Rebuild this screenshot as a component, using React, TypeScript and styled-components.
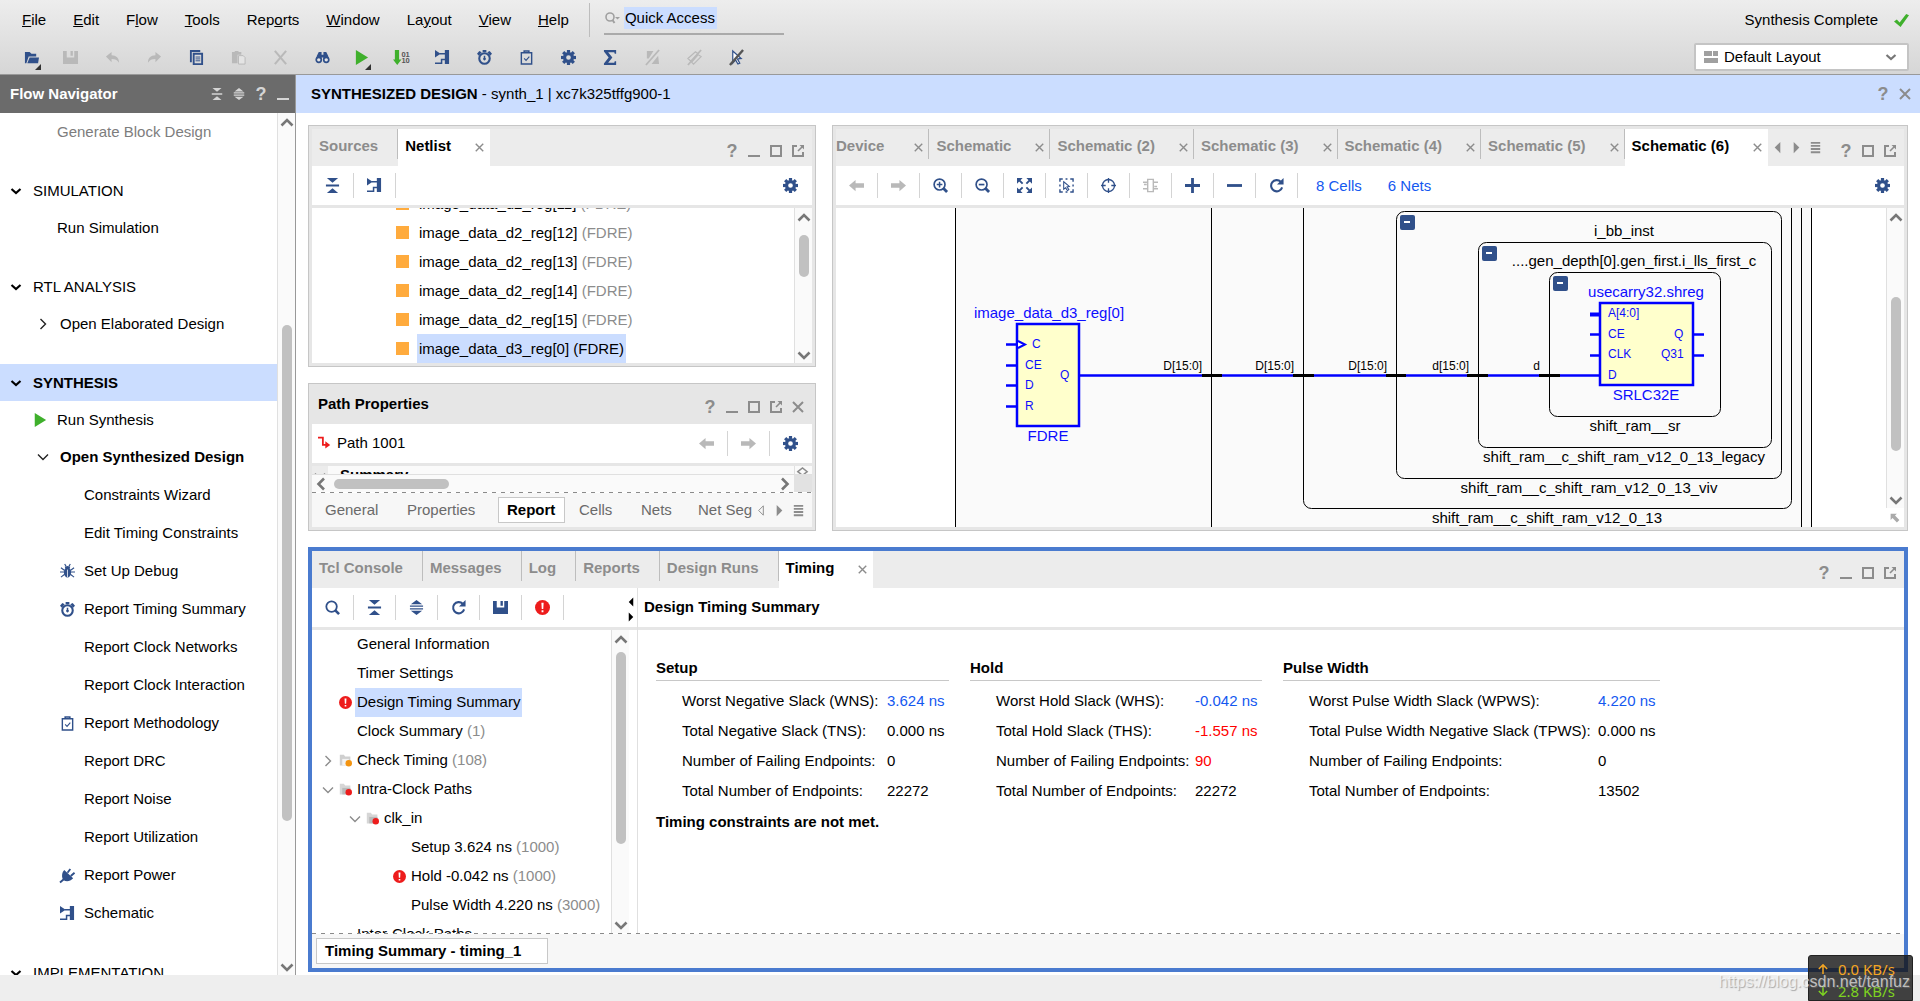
import React from "react";
import styled, { createGlobalStyle, css } from "styled-components";

const C = {
  navy: "#30508a",
  gray: "#8c8c8c",
  off: "#b9b9b9",
  select: "#cbddff",
  strip: "#ececec",
  frame: "#e6e6e6",
  link: "#1458f0",
  green: "#3fb02c",
  red: "#ed1c1c",
};

const Global = createGlobalStyle`
  *, *::before, *::after { box-sizing: border-box; }
  body { margin: 0; background: #eeeeee; }
  body, button, input, select, table {
    font-family: "Liberation Sans", Arial, sans-serif;
    font-size: 15px;
    line-height: 18px;
    color: #000;
  }
  button { margin: 0; padding: 0; border: 0; background: none; text-align: left; white-space: nowrap; }
  a { text-decoration: none; }
`;

/* ---------- icons ---------- */

const teeth = [0, 45, 90, 135, 180, 225, 270, 315];

const ICONS: Record<string, React.ReactNode> = {
  open: (
    <>
      <path d="M1 14V2h5l2 2h5v3H5L2.500 14z" />
      <path d="M6 8h10l-1 6H3.500z" />
    </>
  ),
  save: <path d="M0 1h4v7h8V1h4v14H0zM8 1h2.500v5H8z" />,
  undo: <path d="M1 7l6-5v3.500c5 0 8 3 8 8-2-3-4-4-8-4V13z" />,
  redo: <path d="M15 7L9 2v3.500c-5 0-8 3-8 8 2-3 4-4 8-4V13z" />,
  copy: (
    <g fill="none" stroke="currentColor">
      <path d="M2 13V1h10" strokeWidth="2" />
      <path d="M5 4h9v11H5z" strokeWidth="2" />
      <path d="M7 7.500h5M7 9.500h5M7 11.500h5" />
    </g>
  ),
  paste: (
    <>
      <path d="M1 2h3V1h4v1h3v3H7v9H1z" />
      <path d="M8 6h5l2 2v7H8z" fill="#e4e4e4" stroke="currentColor" />
    </>
  ),
  cross: <path d="M2 1l12 14M14 1L2 15" stroke="currentColor" strokeWidth="2.200" fill="none" />,
  find: (
    <>
      <path d="M2 6l2-4h3v3h2V2h3l2 4 1 4H9V8H7v2H1z" />
      <circle cx="4" cy="10.500" r="2.700" fill="#e4e4e4" stroke="currentColor" strokeWidth="1.800" />
      <circle cx="12" cy="10.500" r="2.700" fill="#e4e4e4" stroke="currentColor" strokeWidth="1.800" />
    </>
  ),
  run: <path d="M2 0l13 8-13 8z" fill={C.green} />,
  bits: (
    <>
      <path d="M2 0h4.500v10H9l-4.500 6L0 10h2z" fill={C.green} />
      <text x="9" y="7" fontSize="8" fontWeight="bold" fill="#555">01</text>
      <text x="9" y="14" fontSize="8" fontWeight="bold" fill="#555">10</text>
    </>
  ),
  schematic: (
    <>
      <path d="M0 0l6 4-6 4zM10.500 0H15v15h-4.500z" />
      <path d="M5 4h6M0 14h7v-4h4" fill="none" stroke="currentColor" strokeWidth="1.600" />
    </>
  ),
  watch: (
    <>
      <circle cx="8" cy="9" r="5.600" fill="none" stroke="currentColor" strokeWidth="2.200" />
      <path d="M6 0h4v2.500H6zM0 4l2.500-3L5 2.500 2 6zM16 4l-2.500-3L11 2.500 14 6zM7.200 6h1.600v2.200a1.500 1.500 0 1 1-1.600 0z" />
    </>
  ),
  clip: (
    <g fill="none" stroke="currentColor">
      <path d="M2.500 3h11v12h-11z" strokeWidth="1.500" />
      <path d="M5.500 3V1h5v2" strokeWidth="1.600" />
      <path d="M5.500 9l2 2 3.500-4" strokeWidth="1.200" />
    </g>
  ),
  gear: (
    <>
      <circle cx="8" cy="8" r="4.200" fill="none" stroke="currentColor" strokeWidth="3.400" />
      {teeth.map((a) => (
        <rect key={a} x="6.300" y="0" width="3.400" height="3" transform={`rotate(${a} 8 8)`} />
      ))}
    </>
  ),
  sigma: <path d="M1 0h13v4h-1.500L12 2.500H5.500L10 8l-4.500 5.500H12l.5-1.500H14v4H1v-1.500L6 8 1 1.500z" />,
  noWarn: (
    <>
      <path d="M2 1h7L4 9H2zM7 15l7-9 1 9z" />
      <path d="M1 16L15 0" stroke="currentColor" strokeWidth="2" />
    </>
  ),
  noLink: (
    <>
      <path d="M1 9l8-7 3 2-8 8zM5 13l7-8 3 2-8 8z" fill="none" stroke="currentColor" strokeWidth="1.300" />
      <path d="M1 16L15 0" stroke="currentColor" strokeWidth="2" />
    </>
  ),
  noCursor: (
    <>
      <path d="M4 1l9 8-4 .5 2.500 4.500-2 1-2.500-4.500L4 14z" fill="#fff" stroke={C.navy} strokeWidth="1.300" />
      <path d="M1 16L15 0" stroke="#555" strokeWidth="2.500" />
    </>
  ),
  collapse: <path d="M2 0h12l-6 5zM1 7h14v2H1zM8 11l6 5H2z" />,
  expand: <path d="M8 0l6 4.500H2zM1 5.800h14v1.400H1zM1 8.800h14v1.400H1zM2 11.500h12L8 16z" />,
  left: <path d="M0 8l7-6v3.500h9v5H7V14z" />,
  right: <path d="M16 8L9 2v3.500H0v5h9V14z" />,
  zoomIn: (
    <g fill="none" stroke="currentColor">
      <circle cx="7" cy="7" r="5.800" strokeWidth="1.800" />
      <path d="M11 11l4 4" strokeWidth="3" />
      <path d="M4 7h6M7 4v6" strokeWidth="1.600" />
    </g>
  ),
  zoomOut: (
    <g fill="none" stroke="currentColor">
      <circle cx="7" cy="7" r="5.800" strokeWidth="1.800" />
      <path d="M11 11l4 4" strokeWidth="3" />
      <path d="M4 7h6" strokeWidth="1.800" />
    </g>
  ),
  search: (
    <g fill="none" stroke="currentColor">
      <circle cx="7" cy="7" r="5.600" strokeWidth="1.900" />
      <path d="M11 11l4 4" strokeWidth="2.800" />
    </g>
  ),
  fit: (
    <>
      <path d="M0 0h6L0 6zM16 0v6l-6-6zM0 16v-6l6 6zM16 16h-6l6-6z" />
      <path d="M2 2l4 4M14 2l-4 4M2 14l4-4M14 14l-4-4" stroke="currentColor" strokeWidth="2" />
    </>
  ),
  area: (
    <g fill="none" stroke="currentColor" strokeWidth="1.500">
      <path d="M1 4V1h3M12 1h3v3M15 12v3h-3M4 15H1v-3M7 1h2M1 7v2M15 7v2M7 15h2" />
      <path d="M5 4l6 5-2.500.5 2 3-1.500 1-2-3L5 12z" strokeWidth="1.100" />
    </g>
  ),
  target: (
    <g fill="none" stroke="currentColor">
      <circle cx="8" cy="8" r="6.400" strokeWidth="1.400" />
      <path d="M8 0v5M8 11v5M0 8h5M11 8h5" strokeWidth="1.400" />
    </g>
  ),
  chip: (
    <g fill="none" stroke="currentColor" strokeWidth="1.500">
      <path d="M5 1.500h6v13H5zM0 4.500h5M0 11.500h5M11 4.500h5M11 11.500h5M1 7h3M12 9h3" />
    </g>
  ),
  plus: <path d="M6.500 0h3v6.500H16v3H9.500V16h-3V9.500H0v-3h6.500z" />,
  minus: <path d="M0 6.500h16v3H0z" />,
  refresh: (
    <>
      <path d="M12.500 4A6 6 0 1 0 14 10" fill="none" stroke="currentColor" strokeWidth="2.200" />
      <path d="M15.500 0v7H8.500z" />
    </>
  ),
  error: (
    <>
      <circle cx="8" cy="8" r="8" fill={C.red} />
      <path d="M6.800 3h2.400l-.4 6.500H7.200zM7 11h2v2H7z" fill="#fff" />
    </>
  ),
  bug: (
    <>
      <ellipse cx="8" cy="9" rx="3.800" ry="5.500" />
      <path d="M5 3l3-1 3 1-1 2H6z" />
      <path d="M5 0l1.500 2.500M11 0L9.500 2.500M0 8.500h16M1 4l4 3M15 4l-4 3M1 14l4-3M15 14l-4-3" stroke="currentColor" strokeWidth="1.200" />
      <path d="M8 6v8" stroke="#fff" strokeWidth="0.800" />
    </>
  ),
  plug: (
    <>
      <path d="M4.500 2l9.500 9c-3 3.500-7.500 4-10 2S1.500 5 4.500 2z" />
      <path d="M8 5l3-4M11.500 8.500L15.500 5M4 12l-4 3.500" stroke="currentColor" strokeWidth="2" />
    </>
  ),
  min: <path d="M2 12h12v2H2z" />,
  max: <path d="M3 3h10v10H3z" fill="none" stroke="currentColor" strokeWidth="2" />,
  pop: (
    <g fill="none" stroke="currentColor">
      <path d="M7 3H3v10h10V9" strokeWidth="2" />
      <path d="M8 8l5-5" strokeWidth="1.600" />
      <path d="M9.500 2H14v4.500z" fill="currentColor" stroke="none" />
    </g>
  ),
  close: <path d="M3 3l10 10M13 3L3 13" stroke="currentColor" strokeWidth="2" fill="none" />,
  tabClose: <path d="M4 4l8 8M12 4l-8 8" stroke="currentColor" strokeWidth="1.500" fill="none" />,
  down: <path d="M3.500 6L8 10l4.500-4" fill="none" stroke="currentColor" strokeWidth="2.200" />,
  thinDown: <path d="M3 5.500l5 5 5-5" fill="none" stroke="currentColor" strokeWidth="1.400" />,
  thinRight: <path d="M5.500 3l5 5-5 5" fill="none" stroke="currentColor" strokeWidth="1.400" />,
  scrollUp: <path d="M2.500 10.500L8 5l5.500 5.500" fill="none" stroke="currentColor" strokeWidth="2.600" />,
  scrollDown: <path d="M2.500 5.500L8 11l5.500-5.500" fill="none" stroke="currentColor" strokeWidth="2.600" />,
  scrollLeft: <path d="M11 2.500L5.500 8l5.500 5.500" fill="none" stroke="currentColor" strokeWidth="2.600" />,
  scrollRight: <path d="M5 2.500L10.500 8 5 13.500" fill="none" stroke="currentColor" strokeWidth="2.600" />,
  triLeft: <path d="M11 2v12L5 8z" />,
  triRight: <path d="M5 2v12l6-6z" />,
  triLeftOpen: <path d="M11 3v10L6 8z" fill="none" stroke="currentColor" />,
  list: <path d="M3 2h10v2H3zM3 5.300h10v2H3zM3 8.600h10v2H3zM3 12h10v2H3z" />,
  corner: <path d="M1 1h10L8 4l7 7-4 4-7-7-3 3z" />,
  path: (
    <>
      <path d="M0 2h6v9h5" fill="none" stroke={C.red} strokeWidth="2.200" />
      <path d="M9 6.500l6 4.500-6 4.500z" fill={C.red} />
    </>
  ),
  spin: <path d="M3 6l5-4 5 4-5 4z" fill="none" stroke="currentColor" strokeWidth="1.600" />,
  tick: <path d="M0 9l3-2 3 3 7-9 3 1.500L7 15z" fill={C.green} />,
  layout: <path d="M1 2h8v5H1zM10 2h5v5h-5zM1 9h14v5H1z" />,
  folderRed: (
    <>
      <path d="M1 1h5l1.500 2H14v11H1z" fill="#d6d6d6" />
      <path d="M4 6h10v8H4z" fill="#b9b9b9" />
      <circle cx="12" cy="11.500" r="4" fill={C.red} />
    </>
  ),
  folderOrange: (
    <>
      <path d="M1 1h5l1.500 2H14v11H1z" fill="#cfcfcf" />
      <path d="M4 6h8v8H4z" fill="#f3f3f3" />
      <circle cx="12" cy="11.500" r="4" fill="#f39410" />
    </>
  ),
  lookup: (
    <>
      <circle cx="6" cy="7" r="4" fill="none" stroke="currentColor" strokeWidth="1.600" />
      <path d="M8.500 10l2 3" stroke="currentColor" strokeWidth="2" />
      <path d="M11 7h5l-2.500 2.500z" />
    </>
  ),
};

const Svg = styled.svg<{ $size: number; $color: string }>`
  display: block;
  flex: none;
  width: ${(p) => p.$size}px;
  height: ${(p) => p.$size}px;
  color: ${(p) => p.$color};
  fill: currentColor;
  overflow: visible;
`;

const Icon = ({ name, size = 16, color = C.navy }: { name: string; size?: number; color?: string }) => (
  <Svg viewBox="0 0 16 16" $size={size} $color={color} aria-hidden="true">
    {ICONS[name]}
  </Svg>
);

/* ---------- page frame ---------- */

const Page = styled.div`
  display: grid;
  grid-template-rows: auto minmax(0, 1fr) 26px;
  height: 100vh;
  min-width: 1280px;
  position: relative;
  overflow: hidden;
`;

const Top = styled.header`
  display: flex;
  justify-content: space-between;
  height: 75px;
  background: linear-gradient(#ededed, #d6d6d6);
  border-bottom: 1px solid #999;
`;

const MenuRow = styled.div`
  display: flex;
  align-items: center;
  height: 40px;
  padding-left: 22px;
`;

const Menu = styled.nav`
  display: flex;
  gap: 27px;
  padding-right: 20px;
`;

const Search = styled.label`
  display: flex;
  align-items: center;
  gap: 4px;
  width: 180px;
  height: 29px;
  margin-left: 14px;
  border-bottom: 2px solid #aaa;
  padding-bottom: 3px;
`;

const SearchInput = styled.input`
  width: 93px;
  height: 22px;
  padding: 0 0 0 1px;
  border: 0;
  background: ${C.select};
`;

const MenuDivider = styled.i`
  width: 1px;
  height: 34px;
  background: #bdbdbd;
`;

const MainTools = styled.div`
  display: flex;
  height: 34px;
  margin-left: 13px;
`;

const MainTool = styled.button<{ $menu?: boolean }>`
  display: grid;
  place-items: center;
  position: relative;
  width: ${(p) => (p.$menu ? 36 : 42)}px;
  ${(p) =>
    p.$menu &&
    css`
      &::after {
        content: "";
        position: absolute;
        right: 8px;
        bottom: 4px;
        border: 3px solid transparent;
        border-right-color: #333;
        border-bottom-color: #333;
      }
    `}
`;

const Status = styled.div`
  display: flex;
  flex-direction: column;
  align-items: flex-end;
  gap: 3px;
  padding-right: 11px;
`;

const StatusText = styled.div`
  display: flex;
  align-items: center;
  gap: 16px;
  height: 40px;
`;

const LayoutBox = styled.label`
  display: flex;
  align-items: center;
  width: 215px;
  height: 28px;
  padding: 0 8px 0 7px;
  gap: 5px;
  background: #fff;
  border: 2px solid #c4c4c4;
  border-radius: 2px;
`;

const LayoutSelect = styled.select`
  flex: 1;
  appearance: none;
  border: 0;
  background: none;
  padding: 0;
`;

const Body = styled.div`
  display: grid;
  grid-template-columns: 296px minmax(0, 1fr);
  min-height: 0;
`;

const Footer = styled.footer`
  background: #eeeeee;
`;

/* ---------- scroll bars ---------- */

const Bar = styled.div`
  display: flex;
  flex-direction: column;
  align-items: center;
  flex: none;
  width: 18px;
  background: #fafafa;
  border-left: 1px solid #e0e0e0;
`;

const Arrow = styled.button<{ $h: number }>`
  display: grid;
  place-items: center;
  height: ${(p) => p.$h}px;
`;

const Space = styled.i<{ $n: number }>`
  flex: ${(p) => p.$n} 0 0;
`;

const Thumb = styled.i<{ $n: number }>`
  flex: ${(p) => p.$n} 0 0;
  width: 10px;
  border-radius: 5px;
  background: #c1c1c1;
`;

const Scroll = ({ parts }: { parts: [number, number, number] }) => (
  <Bar>
    <Arrow $h={20} aria-label="Scroll up"><Icon name="scrollUp" color="#777" /></Arrow>
    <Space $n={parts[0]} />
    <Thumb $n={parts[1]} />
    <Space $n={parts[2]} />
    <Arrow $h={16} aria-label="Scroll down"><Icon name="scrollDown" color="#777" /></Arrow>
  </Bar>
);

/* ---------- flow navigator ---------- */

const Nav = styled.aside`
  display: flex;
  flex-direction: column;
  min-height: 0;
  background: #fff;
  border-right: 1px solid #999;
`;

const NavHead = styled.div`
  display: flex;
  align-items: center;
  flex: none;
  height: 38px;
  padding: 0 1px 0 10px;
  background: #6b6b6b;
  color: #fff;
  font-weight: bold;
`;

const Grow = styled.span`
  flex: 1;
`;

const NavBody = styled.div`
  display: flex;
  flex: 1;
  min-height: 0;
`;

const NavList = styled.div`
  flex: 1;
  min-width: 0;
  overflow: hidden;
`;

const NavHeading = styled.button<{ $on?: boolean }>`
  display: flex;
  align-items: center;
  gap: 9px;
  width: 100%;
  height: 37px;
  margin-top: 22px;
  padding-left: 8px;
  ${(p) => p.$on && css`background: ${C.select}; font-weight: bold;`}
`;

const NavItem = styled.button<{ $indent: number; $tall?: boolean; $muted?: boolean; $bold?: boolean }>`
  display: flex;
  align-items: center;
  gap: 9px;
  width: 100%;
  height: ${(p) => (p.$tall ? 38 : 37)}px;
  padding-left: ${(p) => p.$indent}px;
  color: ${(p) => (p.$muted ? "#7d7d7d" : "#000")};
  font-weight: ${(p) => (p.$bold ? "bold" : "normal")};
`;

const Slot = styled.span<{ $w: number }>`
  display: grid;
  place-items: center;
  flex: none;
  width: ${(p) => p.$w}px;
`;

const subItems: [string, string?][] = [
  ["Constraints Wizard"],
  ["Edit Timing Constraints"],
  ["Set Up Debug", "bug"],
  ["Report Timing Summary", "watch"],
  ["Report Clock Networks"],
  ["Report Clock Interaction"],
  ["Report Methodology", "clip"],
  ["Report DRC"],
  ["Report Noise"],
  ["Report Utilization"],
  ["Report Power", "plug"],
  ["Schematic", "schematic"],
];

const Navigator = () => (
  <Nav>
    <NavHead>
      Flow Navigator
      <Grow />
      <WinButton aria-label="Collapse all"><Icon name="collapse" size={12} color="#d5d5d5" /></WinButton>
      <WinButton aria-label="Expand all"><Icon name="expand" size={12} color="#d5d5d5" /></WinButton>
      <WinButton $light>?</WinButton>
      <WinButton aria-label="Minimize"><Icon name="min" color="#d5d5d5" /></WinButton>
    </NavHead>
    <NavBody>
      <NavList>
        <NavItem $indent={32} $muted><Slot $w={16} />Generate Block Design</NavItem>
        <NavHeading><Slot $w={16}><Icon name="down" color="#000" /></Slot>SIMULATION</NavHeading>
        <NavItem $indent={32}><Slot $w={16} />Run Simulation</NavItem>
        <NavHeading><Slot $w={16}><Icon name="down" color="#000" /></Slot>RTL ANALYSIS</NavHeading>
        <NavItem $indent={35}><Slot $w={16}><Icon name="thinRight" color="#222" /></Slot>Open Elaborated Design</NavItem>
        <NavHeading $on><Slot $w={16}><Icon name="down" color="#000" /></Slot>SYNTHESIS</NavHeading>
        <NavItem $indent={32}><Slot $w={16}><Icon name="run" size={14} /></Slot>Run Synthesis</NavItem>
        <NavItem $indent={35} $tall $bold><Slot $w={16}><Icon name="thinDown" color="#222" /></Slot>Open Synthesized Design</NavItem>
        {subItems.map(([label, icon]) => (
          <NavItem key={label} $indent={59} $tall>
            <Slot $w={16}>{icon && <Icon name={icon} size={15} />}</Slot>
            {label}
          </NavItem>
        ))}
        <NavHeading><Slot $w={16}><Icon name="down" color="#000" /></Slot>IMPLEMENTATION</NavHeading>
      </NavList>
      <Scroll parts={[192, 496, 138]} />
    </NavBody>
  </Nav>
);

/* ---------- panels ---------- */

const Main = styled.main`
  display: flex;
  flex-direction: column;
  min-height: 0;
  background: #fff;
`;

const DesignBar = styled.div`
  display: flex;
  align-items: center;
  flex: none;
  height: 38px;
  padding: 0 4px 0 15px;
  background: ${C.select};
`;

const Workspace = styled.div`
  display: grid;
  grid-template-rows: minmax(0, 406fr) minmax(0, 425fr);
  gap: 16px;
  flex: 1;
  min-height: 0;
  padding: 12px 12px 3px;
`;

const UpperRow = styled.div`
  display: grid;
  grid-template-columns: 508px minmax(0, 1fr);
  gap: 16px;
  min-height: 0;
`;

const LeftStack = styled.div`
  display: grid;
  grid-template-rows: minmax(0, 242fr) minmax(0, 148fr);
  gap: 16px;
  min-height: 0;
`;

const Panel = styled.section<{ $active?: boolean }>`
  display: flex;
  flex-direction: column;
  min-width: 0;
  min-height: 0;
  background: #fff;
  ${(p) =>
    p.$active
      ? css`border: 4px solid #4a7bcf;`
      : css`
          border: 3px solid ${C.frame};
          outline: 1px solid #c6c6c6;
          margin: 1px;
        `}
`;

const Strip = styled.div`
  display: flex;
  flex: none;
  height: 37px;
  background: ${C.strip};
`;

const Tab = styled.button<{ $on?: boolean; $closable?: boolean; $flush?: boolean }>`
  display: flex;
  align-items: center;
  flex: none;
  gap: ${(p) => (p.$flush ? 27 : 21)}px;
  height: 37px;
  padding: 0 ${(p) => (p.$closable ? 3 : 20)}px 4px ${(p) => (p.$flush ? 0 : 7)}px;
  font-weight: bold;
  color: ${(p) => (p.$on ? "#000" : C.gray)};
  background: ${(p) =>
    p.$on ? "#fff" : `linear-gradient(#bdbdbd, #bdbdbd) right top / 1px 30px no-repeat, ${C.strip}`};
`;

const TabX = styled.span`
  padding-top: 4px;
`;

const PanelTab = ({ label, on, x, flush }: { label: string; on?: boolean; x?: boolean; flush?: boolean }) => (
  <Tab $on={on} $closable={x} $flush={flush}>
    {label}
    {x && <TabX><Icon name="tabClose" size={15} color={C.gray} /></TabX>}
  </Tab>
);

const WinButtons = styled.div`
  display: flex;
  align-items: center;
  margin-left: auto;
  padding: 6px 3px 0 0;
`;

const WinButton = styled.button<{ $light?: boolean }>`
  display: grid;
  place-items: center;
  width: 22px;
  height: 22px;
  font-size: 18px;
  font-weight: bold;
  color: ${(p) => (p.$light ? "#d5d5d5" : C.gray)};
`;

const WindowControls = ({ icons }: { icons: string[] }) => (
  <WinButtons>
    <WinButton>?</WinButton>
    {icons.map((n) => (
      <WinButton key={n} aria-label={n}><Icon name={n} color={C.gray} /></WinButton>
    ))}
  </WinButtons>
);

const Tools = styled.div`
  display: flex;
  align-items: center;
  flex: none;
  height: 42px;
  border-bottom: 3px solid ${C.frame};
`;

const Tool = styled.button<{ $plain?: boolean }>`
  display: grid;
  place-items: center;
  flex: none;
  width: 42px;
  height: 25px;
  border-right: 1px solid ${(p) => (p.$plain ? "transparent" : "#d4d4d4")};
`;

const Split = styled.div`
  display: flex;
  flex: 1;
  min-height: 0;
`;

const NetRows = styled.div`
  display: flex;
  flex-direction: column;
  justify-content: flex-end;
  flex: 1;
  overflow: hidden;
`;

const NetRow = styled.button`
  display: flex;
  align-items: center;
  flex: none;
  gap: 8px;
  height: 29px;
  padding-left: 84px;
`;

const Square = styled.i`
  width: 13px;
  height: 13px;
  background: #ffab3d;
`;

const Label = styled.span<{ $on?: boolean }>`
  padding: 0 2px;
  line-height: 29px;
  background: ${(p) => (p.$on ? C.select : "transparent")};
`;

const Muted = styled.span`
  color: ${C.gray};
`;

const nets = ["image_data_d2_reg[11]", "image_data_d2_reg[12]", "image_data_d2_reg[13]", "image_data_d2_reg[14]", "image_data_d2_reg[15]"];

const NetlistPanel = () => (
  <Panel>
    <Strip>
      <PanelTab label="Sources" />
      <PanelTab label="Netlist" on x />
      <WindowControls icons={["min", "max", "pop"]} />
    </Strip>
    <Tools>
      <Tool aria-label="Collapse all"><Icon name="collapse" size={15} /></Tool>
      <Tool aria-label="Schematic"><Icon name="schematic" size={15} /></Tool>
      <Grow />
      <Tool $plain aria-label="Settings"><Icon name="gear" size={15} /></Tool>
    </Tools>
    <Split>
      <NetRows>
        {nets.map((n) => (
          <NetRow key={n}><Square /><Label>{n} <Muted>(FDRE)</Muted></Label></NetRow>
        ))}
        <NetRow><Square /><Label $on>image_data_d3_reg[0] (FDRE)</Label></NetRow>
      </NetRows>
      <Scroll parts={[7, 42, 70]} />
    </Split>
  </Panel>
);

const TitleStrip = styled.div`
  display: flex;
  align-items: center;
  flex: none;
  height: 37px;
  padding: 0 0 3px 6px;
  background: ${C.frame};
  font-weight: bold;
`;

const PathName = styled.span`
  display: flex;
  align-items: center;
  gap: 6px;
  padding: 0 0 2px 6px;
`;

const SummaryLine = styled.div`
  display: flex;
  flex: 1;
  min-height: 0;
  overflow: hidden;
  background: #fafafa;
  font-weight: bold;
`;

const Gutter = styled.span`
  width: 16px;
  margin-right: 12px;
  padding-top: 2px;
  background: ${C.strip};
`;

const SpinBox = styled.span`
  width: 18px;
  border-left: 1px solid #e0e0e0;
`;

const HBar = styled.div`
  display: flex;
  align-items: center;
  flex: none;
  height: 18px;
  border-top: 1px solid #e0e0e0;
  background: #fafafa;
`;

const HThumb = styled.i`
  width: 115px;
  height: 10px;
  margin-left: 4px;
  border-radius: 5px;
  background: #c1c1c1;
`;

const HCorner = styled.i`
  width: 18px;
  height: 18px;
  background: #e2e2e2;
`;

const Dash = styled.div`
  flex: none;
  height: 1px;
  background: repeating-linear-gradient(90deg, #8a8a8a 0 4px, #fff 4px 9px);
`;

const BottomTabs = styled.div`
  display: flex;
  align-items: center;
  flex: none;
  height: 34px;
  padding-left: 4px;
  background: #f7f7f7;
`;

const BottomTab = styled.button<{ $on?: boolean; $w: number }>`
  flex: none;
  width: ${(p) => p.$w}px;
  height: 26px;
  padding-left: 8px;
  border: 1px solid ${(p) => (p.$on ? "#c8c8c8" : "transparent")};
  background: ${(p) => (p.$on ? "#fff" : "transparent")};
  font-weight: ${(p) => (p.$on ? "bold" : "normal")};
  color: ${(p) => (p.$on ? "#000" : "#6a6a6a")};
`;

const StepButton = styled.button`
  display: grid;
  place-items: center;
  align-self: center;
  width: 19px;
  height: 26px;
`;

const PathPanel = () => (
  <Panel>
    <TitleStrip>
      Path Properties
      <WindowControls icons={["min", "max", "pop", "close"]} />
    </TitleStrip>
    <Tools>
      <PathName><Icon name="path" size={13} />Path 1001</PathName>
      <Grow />
      <Tool aria-label="Back"><Icon name="left" color={C.off} size={15} /></Tool>
      <Tool aria-label="Forward"><Icon name="right" color={C.off} size={15} /></Tool>
      <Tool $plain aria-label="Settings"><Icon name="gear" size={15} /></Tool>
    </Tools>
    <SummaryLine>
      <Gutter><Icon name="thinDown" color={C.gray} /></Gutter>
      Summary
      <Grow />
      <SpinBox><Icon name="spin" color={C.gray} size={15} /></SpinBox>
    </SummaryLine>
    <HBar>
      <Slot $w={18}><Icon name="scrollLeft" color="#777" /></Slot>
      <HThumb />
      <Grow />
      <Slot $w={18}><Icon name="scrollRight" color="#777" /></Slot>
      <HCorner />
    </HBar>
    <Dash />
    <BottomTabs>
      <BottomTab $w={82}>General</BottomTab>
      <BottomTab $w={100}>Properties</BottomTab>
      <BottomTab $w={67} $on>Report</BottomTab>
      <Slot $w={5} />
      <BottomTab $w={62}>Cells</BottomTab>
      <BottomTab $w={57}>Nets</BottomTab>
      <BottomTab $w={62}>Net Seg</BottomTab>
      <StepButton aria-label="Previous"><Icon name="triLeftOpen" size={15} color={C.gray} /></StepButton>
      <StepButton aria-label="Next"><Icon name="triRight" size={15} color={C.gray} /></StepButton>
      <StepButton aria-label="Tab list"><Icon name="list" size={15} color={C.gray} /></StepButton>
    </BottomTabs>
  </Panel>
);

/* ---------- schematic ---------- */

const Canvas = styled.div`
  flex: 1;
  min-width: 0;
  overflow: hidden;
`;

const Drawing = styled.svg`
  display: block;
  font-family: "Liberation Sans", Arial, sans-serif;
`;

const ScrollColumn = styled.div`
  display: flex;
  flex-direction: column;
  align-items: center;
`;

const ScrollFill = styled.div`
  display: flex;
  flex: 1;
  min-height: 0;
`;

const CornerBox = styled.button`
  display: grid;
  place-items: center;
  width: 18px;
  height: 19px;
`;

const LinkText = styled.a`
  padding-left: 18px;
  margin-right: 8px;
  color: ${C.link};
`;

const Collapse = ({ x, y }: { x: number; y: number }) => (
  <g>
    <rect x={x} y={y} width="15" height="15" rx="2" fill={C.navy} />
    <rect x={x + 4} y={y + 6} width="6" height="2" fill="#fff" />
  </g>
);

const frames: [number, number, number, number][] = [
  [1303, 150, 488, 358],
  [1396, 211, 385, 267],
  [1478, 242, 293, 205],
  [1549, 272, 171, 144],
];

const captions: [string, number, number, boolean?][] = [
  ["image_data_d3_reg[0]", 1049, 318, true],
  ["FDRE", 1048, 441, true],
  ["usecarry32.shreg", 1646, 297, true],
  ["SRLC32E", 1646, 400, true],
  ["i_bb_inst", 1624, 236],
  ["....gen_depth[0].gen_first.i_lls_first_c", 1634, 266],
  ["shift_ram__sr", 1635, 431],
  ["shift_ram__c_shift_ram_v12_0_13_legacy", 1624, 462],
  ["shift_ram__c_shift_ram_v12_0_13_viv", 1589, 493],
  ["shift_ram__c_shift_ram_v12_0_13", 1547, 523],
];

const pinNames: [string, number, number][] = [
  ["C", 1032, 348],
  ["CE", 1025, 369],
  ["D", 1025, 389],
  ["R", 1025, 410],
  ["Q", 1060, 379],
  ["A[4:0]", 1608, 317],
  ["CE", 1608, 338],
  ["CLK", 1608, 358],
  ["D", 1608, 379],
  ["Q", 1674, 338],
  ["Q31", 1661, 358],
];

const busNames: [string, number][] = [
  ["D[15:0]", 1202],
  ["D[15:0]", 1294],
  ["D[15:0]", 1387],
  ["d[15:0]", 1469],
  ["d", 1540],
];

const SchematicDrawing = () => (
  <Drawing width="1050" height="319" viewBox="836 208 1050 319">
    <rect x="955" y="200" width="856" height="340" fill="#fafafa" />
    <g stroke="#000" fill="none">
      <path d="M955.500 200v340M1211.500 200v340M1801.500 200v340M1811.500 200v340" />
      {frames.map(([x, y, w, h]) => (
        <rect key={x} x={x + 0.5} y={y + 0.5} width={w} height={h} rx="8" />
      ))}
    </g>
    <Collapse x={1400} y={215} />
    <Collapse x={1482} y={246} />
    <Collapse x={1553} y={276} />
    <g stroke="#0000ff" strokeWidth="2.500">
      <path d="M1080 375.500H1599" />
      <path d="M1006 344.500h11M1006 365.500h11M1006 385.500h11M1006 406.500h11M1590 334.500h10M1590 355.500h10M1693 334.500h11M1693 355.500h11" />
      <path d="M1590 314.500h10" strokeWidth="4" />
      <rect x="1017" y="324" width="62" height="102" fill="#ffffcc" />
      <rect x="1600" y="303" width="93" height="82" fill="#ffffcc" />
      <path d="M1018 341l7 3.500-7 3.500" fill="#fff" strokeWidth="2" />
    </g>
    <path d="M1202 375.500h20M1293 375.500h21M1386 375.500h20M1467 375.500h21M1539 375.500h21" stroke="#000" strokeWidth="3" />
    <g fontSize="15" textAnchor="middle">
      {captions.map(([t, x, y, blue]) => (
        <text key={t} x={x} y={y} fill={blue ? "#0d0dff" : "#000"}>{t}</text>
      ))}
    </g>
    <g fontSize="12" fill="#0d0dff">
      {pinNames.map(([t, x, y]) => (
        <text key={`${t}${x}${y}`} x={x} y={y}>{t}</text>
      ))}
    </g>
    <g fontSize="12" textAnchor="end">
      {busNames.map(([t, x]) => (
        <text key={x} x={x} y="370">{t}</text>
      ))}
    </g>
  </Drawing>
);

const schematicTools = [
  ["left", C.off],
  ["right", C.off],
  ["zoomIn"],
  ["zoomOut"],
  ["fit"],
  ["area"],
  ["target"],
  ["chip", C.off],
  ["plus"],
  ["minus"],
  ["refresh"],
];

const SchematicPanel = () => (
  <Panel>
    <Strip>
      <PanelTab label="Device" x flush />
      <PanelTab label="Schematic" x />
      <PanelTab label="Schematic (2)" x />
      <PanelTab label="Schematic (3)" x />
      <PanelTab label="Schematic (4)" x />
      <PanelTab label="Schematic (5)" x />
      <PanelTab label="Schematic (6)" x on />
      <StepButton aria-label="Previous"><Icon name="triLeft" size={15} color={C.gray} /></StepButton>
      <StepButton aria-label="Next"><Icon name="triRight" size={15} color={C.gray} /></StepButton>
      <StepButton aria-label="Tab list"><Icon name="list" size={15} color={C.gray} /></StepButton>
      <WindowControls icons={["max", "pop"]} />
    </Strip>
    <Tools>
      {schematicTools.map(([n, c]) => (
        <Tool key={n} aria-label={n}><Icon name={n} color={c} size={15} /></Tool>
      ))}
      <LinkText href="#cells">8 Cells</LinkText>
      <LinkText href="#nets">6 Nets</LinkText>
      <Grow />
      <Tool $plain aria-label="Settings"><Icon name="gear" size={15} /></Tool>
    </Tools>
    <Split>
      <Canvas><SchematicDrawing /></Canvas>
      <ScrollColumn>
        <ScrollFill><Scroll parts={[69, 154, 41]} /></ScrollFill>
        <CornerBox aria-label="Overview"><Icon name="corner" size={10} color="#aaa" /></CornerBox>
      </ScrollColumn>
    </Split>
  </Panel>
);

/* ---------- timing ---------- */

const TreePane = styled.div`
  display: flex;
  flex-direction: column;
  flex: none;
  width: 326px;
  min-height: 0;
  border-right: 1px solid #e0e0e0;
`;

const TreeArea = styled.div`
  display: flex;
  flex: 1;
  min-height: 0;
  padding-right: 8px;
`;

const TreeRows = styled.div`
  display: flex;
  flex-direction: column;
  flex: 1;
  overflow: hidden;
`;

const TreeRow = styled.button<{ $level: number }>`
  display: flex;
  align-items: center;
  flex: none;
  gap: 3px;
  height: 29px;
  padding-left: ${(p) => 8 + p.$level * 27}px;
  ${Label} {
    padding-bottom: 2px;
    line-height: 27px;
  }
`;

const SplitArrows = styled.div`
  display: grid;
  gap: 3px;
  margin-left: auto;
  padding-top: 3px;
`;

const tree: { text: string; count?: string; level: number; open?: string; icon?: string; on?: boolean }[] = [
  { text: "General Information", level: 0 },
  { text: "Timer Settings", level: 0 },
  { text: "Design Timing Summary", level: 0, icon: "error", on: true },
  { text: "Clock Summary", count: "(1)", level: 0 },
  { text: "Check Timing", count: "(108)", level: 0, open: "thinRight", icon: "folderOrange" },
  { text: "Intra-Clock Paths", level: 0, open: "thinDown", icon: "folderRed" },
  { text: "clk_in", level: 1, open: "thinDown", icon: "folderRed" },
  { text: "Setup 3.624 ns", count: "(1000)", level: 2 },
  { text: "Hold -0.042 ns", count: "(1000)", level: 2, icon: "error" },
  { text: "Pulse Width 4.220 ns", count: "(3000)", level: 2 },
  { text: "Inter-Clock Paths", level: 0 },
];

const Report = styled.div`
  flex: 1;
  min-width: 0;
`;

const ReportTitle = styled(Tools)`
  padding: 0 0 2px 6px;
  font-weight: bold;
`;

const Groups = styled.div`
  display: flex;
  gap: 21px;
  padding: 27px 0 0 18px;
`;

const Group = styled.table<{ $w: number }>`
  width: ${(p) => p.$w}px;
  border-collapse: collapse;
  align-self: flex-start;
  caption {
    height: 24px;
    margin-bottom: 5px;
    padding-top: 2px;
    border-bottom: 1px solid #c8c8c8;
    font-weight: bold;
    text-align: left;
  }
  th {
    height: 30px;
    padding: 0 0 0 26px;
    font-weight: normal;
    text-align: left;
    white-space: nowrap;
  }
`;

const Value = styled.td<{ $tone?: string; $w: number }>`
  width: ${(p) => p.$w}px;
  padding: 0;
  white-space: nowrap;
  color: ${(p) => p.$tone || "#000"};
`;

const Verdict = styled.p`
  margin: 7px 0 0 18px;
  font-weight: bold;
`;

type Row = [string, string, string?];
const groups: { title: string; width: number; value: number; rows: Row[] }[] = [
  {
    title: "Setup",
    width: 293,
    value: 62,
    rows: [
      ["Worst Negative Slack (WNS):", "3.624 ns", C.link],
      ["Total Negative Slack (TNS):", "0.000 ns"],
      ["Number of Failing Endpoints:", "0"],
      ["Total Number of Endpoints:", "22272"],
    ],
  },
  {
    title: "Hold",
    width: 292,
    value: 67,
    rows: [
      ["Worst Hold Slack (WHS):", "-0.042 ns", C.link],
      ["Total Hold Slack (THS):", "-1.557 ns", "#f00"],
      ["Number of Failing Endpoints:", "90", "#f00"],
      ["Total Number of Endpoints:", "22272"],
    ],
  },
  {
    title: "Pulse Width",
    width: 377,
    value: 62,
    rows: [
      ["Worst Pulse Width Slack (WPWS):", "4.220 ns", C.link],
      ["Total Pulse Width Negative Slack (TPWS):", "0.000 ns"],
      ["Number of Failing Endpoints:", "0"],
      ["Total Number of Endpoints:", "13502"],
    ],
  },
];

const TimingPanel = () => (
  <Panel $active>
    <Strip>
      {["Tcl Console", "Messages", "Log", "Reports", "Design Runs"].map((t) => (
        <PanelTab key={t} label={t} />
      ))}
      <PanelTab label="Timing" on x />
      <WindowControls icons={["min", "max", "pop"]} />
    </Strip>
    <Split>
      <TreePane>
        <Tools>
          {["search", "collapse", "expand", "refresh", "save", "error"].map((n) => (
            <Tool key={n} aria-label={n}><Icon name={n} size={15} /></Tool>
          ))}
          <SplitArrows>
            <Icon name="triLeft" size={12} color="#000" />
            <Icon name="triRight" size={12} color="#000" />
          </SplitArrows>
        </Tools>
        <TreeArea>
          <TreeRows>
            {tree.map((r) => (
              <TreeRow key={r.text} $level={r.level}>
                <Slot $w={16}>{r.open && <Icon name={r.open} color={C.gray} />}</Slot>
                <Slot $w={13}>{r.icon && <Icon name={r.icon} size={13} />}</Slot>
                <Label $on={r.on}>{r.text}{r.count && <Muted> {r.count}</Muted>}</Label>
              </TreeRow>
            ))}
          </TreeRows>
          <Scroll parts={[2, 191, 73]} />
        </TreeArea>
      </TreePane>
      <Report>
        <ReportTitle>Design Timing Summary</ReportTitle>
        <Groups>
          {groups.map((g) => (
            <Group key={g.title} $w={g.width}>
              <caption>{g.title}</caption>
              <tbody>
                {g.rows.map(([label, value, tone]) => (
                  <tr key={label}>
                    <th scope="row">{label}</th>
                    <Value $tone={tone} $w={g.value}>{value}</Value>
                  </tr>
                ))}
              </tbody>
            </Group>
          ))}
        </Groups>
        <Verdict>Timing constraints are not met.</Verdict>
      </Report>
    </Split>
    <Dash />
    <BottomTabs>
      <BottomTab $w={232} $on>Timing Summary - timing_1</BottomTab>
    </BottomTabs>
  </Panel>
);

/* ---------- floating network meter ---------- */

const Meter = styled.div`
  position: absolute;
  right: 7px;
  bottom: 0;
  width: 105px;
  height: 46px;
  padding: 2px 0 0 9px;
  overflow: hidden;
  border: 1px solid #222;
  border-radius: 3px 3px 0 0;
  background: rgba(20, 20, 20, 0.8);
  font-family: "Noto Sans", "Open Sans", sans-serif;
`;

const MeterLine = styled.div<{ $color: string }>`
  display: flex;
  align-items: center;
  gap: 10px;
  height: 22px;
  color: ${(p) => p.$color};
`;

const Watermark = styled.div`
  position: absolute;
  right: 10px;
  bottom: 9px;
  font-size: 16px;
  line-height: 20px;
  color: rgba(255, 255, 255, 0.65);
  text-shadow: 1px 1px 1px rgba(120, 120, 120, 0.6);
`;

const MeterArrow = ({ up }: { up?: boolean }) => (
  <Svg viewBox="0 0 12 12" $size={10} $color="inherit">
    <path d={up ? "M6 12V1M1 6l5-5 5 5" : "M6 0v11M1 6l5 5 5-5"} fill="none" stroke="currentColor" strokeWidth="1.800" />
  </Svg>
);

const menus: [string, string, string][] = [
  ["", "F", "ile"],
  ["", "E", "dit"],
  ["F", "l", "ow"],
  ["", "T", "ools"],
  ["Rep", "o", "rts"],
  ["", "W", "indow"],
  ["La", "y", "out"],
  ["", "V", "iew"],
  ["", "H", "elp"],
];

const mainTools: [string, string?][] = [
  ["open"],
  ["save", C.off],
  ["undo", C.off],
  ["redo", C.off],
  ["copy"],
  ["paste", C.off],
  ["cross", C.off],
  ["find"],
  ["run"],
  ["bits"],
  ["schematic"],
  ["watch"],
  ["clip"],
  ["gear"],
  ["sigma"],
  ["noWarn", C.off],
  ["noLink", C.off],
  ["noCursor"],
];

export default function App() {
  return (
    <Page>
      <Global />
      <Top>
        <div>
          <MenuRow>
            <Menu>
              {menus.map(([a, u, b]) => (
                <button key={a + u + b}>{a}<u>{u}</u>{b}</button>
              ))}
            </Menu>
            <MenuDivider />
            <Search>
              <Icon name="lookup" color="#a0a0a0" />
              <SearchInput defaultValue="Quick Access" aria-label="Quick Access" />
            </Search>
          </MenuRow>
          <MainTools>
            {mainTools.map(([n, c]) => (
              <MainTool key={n} $menu={n === "open" || n === "run"} aria-label={n}>
                <Icon name={n} color={c} size={15} />
              </MainTool>
            ))}
          </MainTools>
        </div>
        <Status>
          <StatusText>Synthesis Complete<Icon name="tick" size={15} /></StatusText>
          <LayoutBox>
            <Icon name="layout" color="#a0a0a0" />
            <LayoutSelect aria-label="Layout"><option>Default Layout</option></LayoutSelect>
            <Icon name="down" color="#777" />
          </LayoutBox>
        </Status>
      </Top>
      <Body>
        <Navigator />
        <Main>
          <DesignBar>
            <span><b>SYNTHESIZED DESIGN</b> - synth_1 | xc7k325tffg900-1</span>
            <Grow />
            <WinButton>?</WinButton>
            <WinButton aria-label="Close"><Icon name="close" color={C.gray} /></WinButton>
          </DesignBar>
          <Workspace>
            <UpperRow>
              <LeftStack>
                <NetlistPanel />
                <PathPanel />
              </LeftStack>
              <SchematicPanel />
            </UpperRow>
            <TimingPanel />
          </Workspace>
        </Main>
      </Body>
      <Footer />
      <Meter>
        <MeterLine $color="#f5a623"><MeterArrow up />0.0 KB/s</MeterLine>
        <MeterLine $color="#7ed321"><MeterArrow />2.8 KB/s</MeterLine>
      </Meter>
      <Watermark>https://blog.csdn.net/tanfuz</Watermark>
    </Page>
  );
}
